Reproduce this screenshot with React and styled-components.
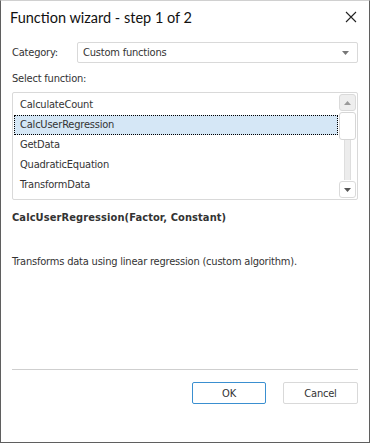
import React from "react";
import styled, { createGlobalStyle } from "styled-components";

const Global = createGlobalStyle`
  html, body { margin: 0; padding: 0; background: #fff; }
  * { box-sizing: border-box; }
`;

const Dialog = styled.div`
  width: 370px;
  height: 443px;
  background: #fff;
  border: 1px solid #5f5f5f;
  border-top-color: #d0d0d0;
  font-family: "DejaVu Sans Condensed", "DejaVu Sans", sans-serif;
  font-size: 11px;
  letter-spacing: -0.2px;
  color: #333;
  display: flex;
  flex-direction: column;
`;

const TitleBar = styled.div`
  height: 32px;
  display: flex;
  align-items: center;
  justify-content: space-between;
  padding: 0 8px 0 9px;
  font-family: Lato, "Segoe UI", sans-serif;
  font-size: 14.5px;
  letter-spacing: 0;
  color: #111;
`;

const CloseBtn = styled.div`
  width: 20px;
  height: 20px;
  display: flex;
  align-items: center;
  justify-content: center;
`;

const Body = styled.div`
  flex: 1;
  display: flex;
  flex-direction: column;
  padding: 9px 11px 0 11px;
`;

const CategoryRow = styled.div`
  display: flex;
  align-items: center;
  height: 21px;
`;

const Label = styled.div`
  width: 65px;
`;

const Select = styled.div`
  flex: 1;
  height: 21px;
  border: 1px solid #d9d9d9;
  border-radius: 2px;
  display: flex;
  align-items: center;
  justify-content: space-between;
  padding: 0 8px 0 5px;
`;

const Caption = styled.div`
  margin-top: 7px;
  height: 18px;
  line-height: 18px;
`;

const ListBox = styled.div`
  margin-top: 4px;
  height: 108px;
  border: 1px solid #d9d9d9;
  border-radius: 2px;
  display: flex;
  padding: 1px;
`;

const Items = styled.div`
  flex: 1;
  display: flex;
  flex-direction: column;
  padding-top: 1px;
`;

const Item = styled.div`
  height: 20px;
  line-height: 18px;
  padding-left: 5px;
  border: 1px dotted ${(p) => (p.selected ? "#000" : "transparent")};
  background: ${(p) => (p.selected ? "#d5e7f6" : "transparent")};
`;

const ScrollBar = styled.div`
  width: 17px;
  display: flex;
  flex-direction: column;
  align-items: center;
  gap: 1px;
  margin-left: 1px;
`;

const ScrollBtn = styled.div`
  width: 17px;
  height: 17px;
  border: 1px solid #dadada;
  border-radius: 3px;
  background: ${(p) => (p.pressed ? "#eeeeee" : "#fff")};
  display: flex;
  align-items: center;
  justify-content: center;
`;

const Track = styled.div`
  flex: 1;
  width: 7px;
  background: #ececec;
  border-left: 1px solid #dedede;
  border-right: 1px solid #dedede;
  display: flex;
  justify-content: center;
`;

const Thumb = styled.div`
  width: 17px;
  height: 28px;
  flex: none;
  background: #fff;
  border: 1px solid #d6d6d6;
  border-radius: 3px;
`;

const Signature = styled.div`
  margin-top: 8px;
  font-weight: bold;
  letter-spacing: 0.1px;
  color: #333;
  height: 20px;
  line-height: 20px;
`;

const Description = styled.div`
  margin-top: 25px;
  line-height: 18px;
`;

const Footer = styled.div`
  margin-top: auto;
  border-top: 1px solid #cfcfcf;
  height: 73px;
  display: flex;
  justify-content: flex-end;
  gap: 17px;
  padding-top: 12px;
`;

const Button = styled.div`
  width: ${(p) => (p.primary ? "74px" : "75px")};
  height: 22px;
  border: 1px solid ${(p) => (p.primary ? "#3a8fd0" : "#d9d9d9")};
  border-radius: 2px;
  display: flex;
  align-items: center;
  justify-content: center;
  color: #333;
`;

const Arrow = ({ up, color }) => (
  <svg width="7" height="4" viewBox="0 0 7 4">
    <path d={up ? "M0 4 L3.5 0 L7 4 Z" : "M0 0 L7 0 L3.5 4 Z"} fill={color} />
  </svg>
);

const functions = [
  "CalculateCount",
  "CalcUserRegression",
  "GetData",
  "QuadraticEquation",
  "TransformData",
];

export default function App() {
  return (
    <>
      <Global />
      <Dialog>
        <TitleBar>
          <span>Function wizard - step 1 of 2</span>
          <CloseBtn>
            <svg width="12" height="12" viewBox="0 0 12 12">
              <path d="M1 1 L11 11 M11 1 L1 11" stroke="#222" strokeWidth="1.1" />
            </svg>
          </CloseBtn>
        </TitleBar>
        <Body>
          <CategoryRow>
            <Label>Category:</Label>
            <Select>
              <span>Custom functions</span>
              <Arrow color="#777" />
            </Select>
          </CategoryRow>
          <Caption>Select function:</Caption>
          <ListBox>
            <Items>
              {functions.map((f) => (
                <Item key={f} selected={f === "CalcUserRegression"}>
                  {f}
                </Item>
              ))}
            </Items>
            <ScrollBar>
              <ScrollBtn pressed>
                <Arrow up color="#9a9a9a" />
              </ScrollBtn>
              <Track>
                <Thumb />
              </Track>
              <ScrollBtn>
                <Arrow color="#555" />
              </ScrollBtn>
            </ScrollBar>
          </ListBox>
          <Signature>CalcUserRegression(Factor, Constant)</Signature>
          <Description>Transforms data using linear regression (custom algorithm).</Description>
          <Footer>
            <Button primary>OK</Button>
            <Button>Cancel</Button>
          </Footer>
        </Body>
      </Dialog>
    </>
  );
}
